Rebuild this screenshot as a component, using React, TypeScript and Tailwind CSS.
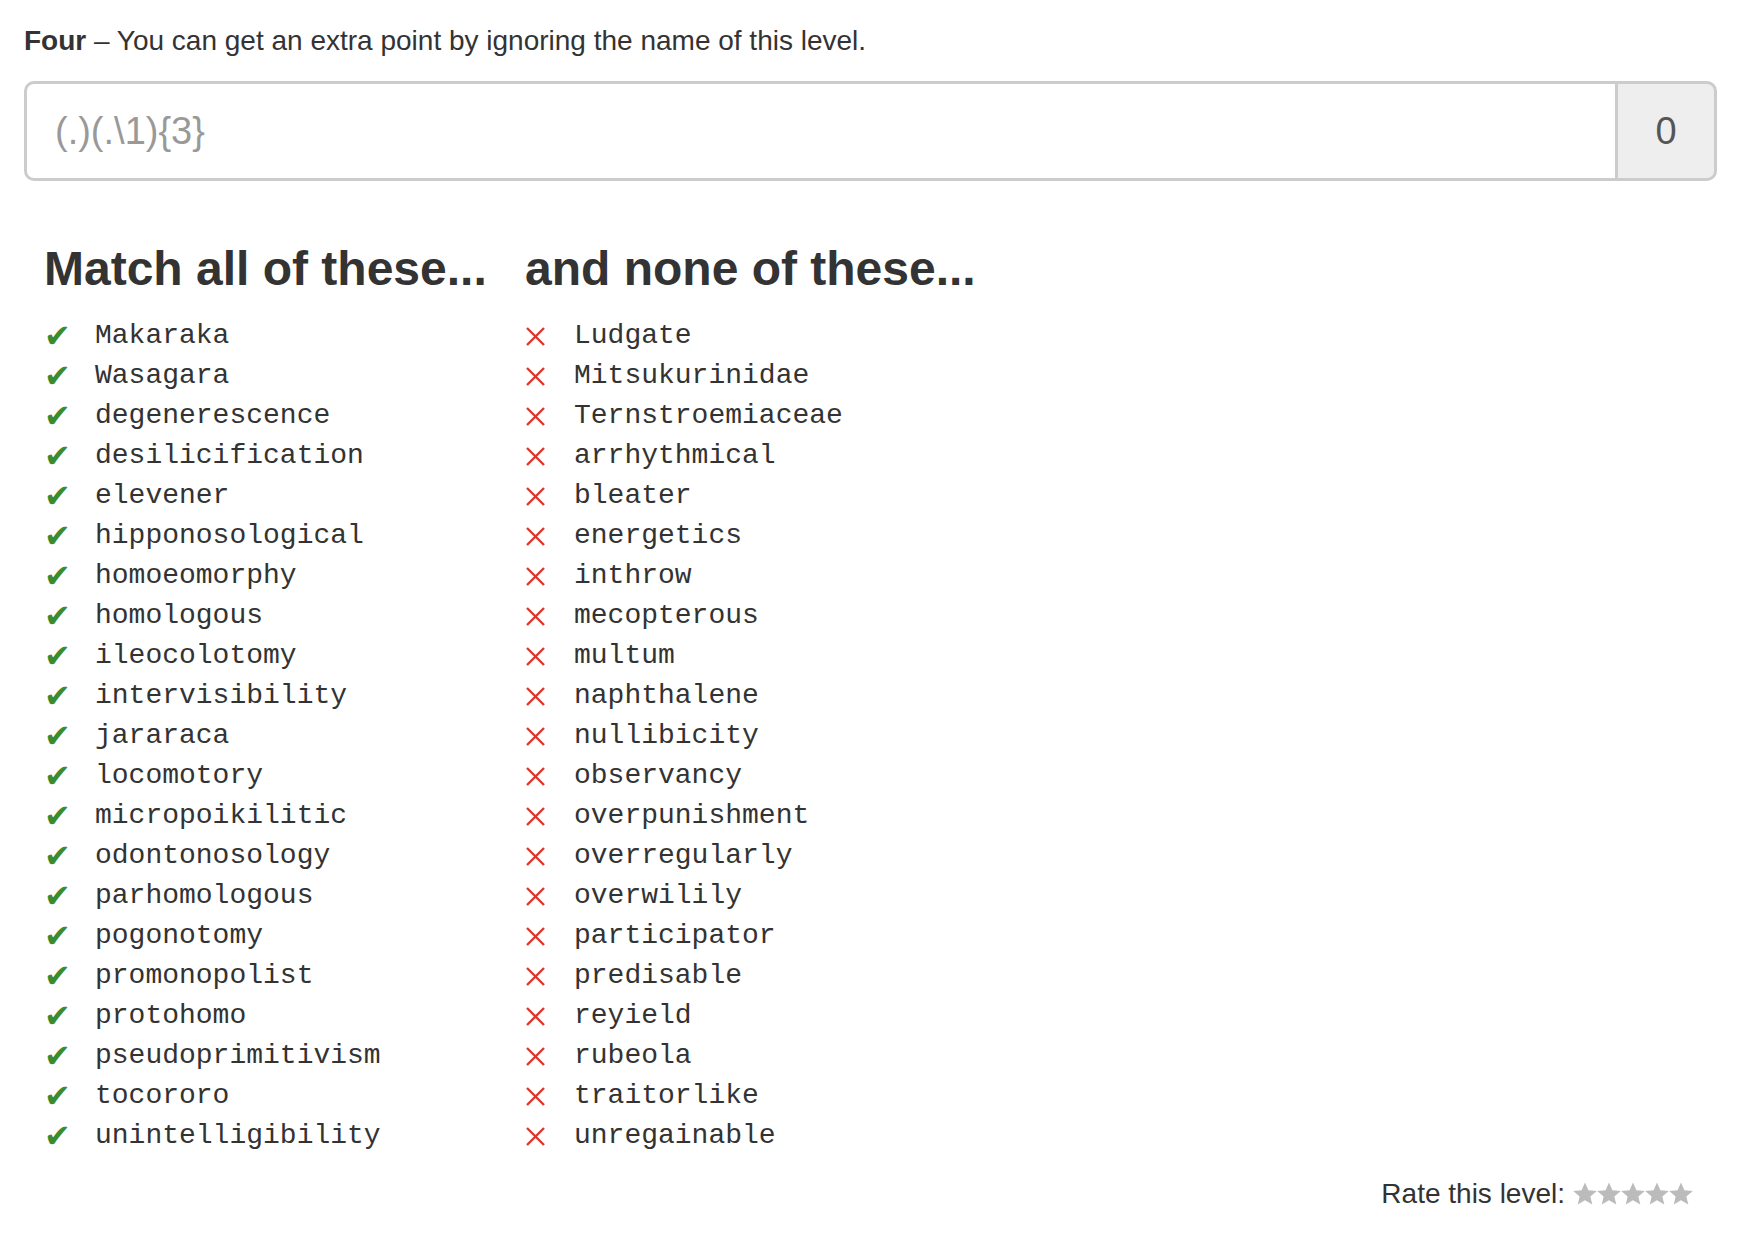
const matches = [
  "Makaraka",
  "Wasagara",
  "degenerescence",
  "desilicification",
  "elevener",
  "hipponosological",
  "homoeomorphy",
  "homologous",
  "ileocolotomy",
  "intervisibility",
  "jararaca",
  "locomotory",
  "micropoikilitic",
  "odontonosology",
  "parhomologous",
  "pogonotomy",
  "promonopolist",
  "protohomo",
  "pseudoprimitivism",
  "tocororo",
  "unintelligibility",
];

const nonMatches = [
  "Ludgate",
  "Mitsukurinidae",
  "Ternstroemiaceae",
  "arrhythmical",
  "bleater",
  "energetics",
  "inthrow",
  "mecopterous",
  "multum",
  "naphthalene",
  "nullibicity",
  "observancy",
  "overpunishment",
  "overregularly",
  "overwilily",
  "participator",
  "predisable",
  "reyield",
  "rubeola",
  "traitorlike",
  "unregainable",
];

function Cross() {
  return (
    <svg width="21" height="21" viewBox="0 0 21 21" className="text-[#e0352b]">
      <path d="M2 2 L19 19 M19 2 L2 19" stroke="currentColor" strokeWidth="2.4" fill="none" />
    </svg>
  );
}

function Star() {
  return (
    <svg width="24" height="24" viewBox="1 1 22 22" className="text-[#bbb]">
      <path
        d="M12 1.5l3.1 7.1 7.7.6-5.9 5 1.8 7.5L12 17.7l-6.7 4 1.8-7.5-5.9-5 7.7-.6z"
        fill="currentColor"
      />
    </svg>
  );
}

function WordList({ words, good }: { words: string[]; good: boolean }) {
  return (
    <ul className="mt-[21px]">
      {words.map((w) => (
        <li key={w} className="flex h-[40px] items-center">
          <span className={good ? "flex w-[51px] items-center" : "flex w-[49px] items-center"}>
            {good ? (
              <span className="font-['DejaVu_Sans',sans-serif] text-[32px] leading-none text-[#3c8b2c]">✔</span>
            ) : (
              <Cross />
            )}
          </span>
          <span className="font-['Liberation_Mono',monospace] text-[28px] leading-[40px] text-[#333]">{w}</span>
        </li>
      ))}
    </ul>
  );
}

export default function App() {
  return (
    <div className="min-h-screen bg-white pl-[24px] pr-[35px] pt-[21px] font-['Liberation_Sans',Arial,sans-serif] text-[#333]">
      <p className="text-[28px] leading-[40px]">
        <b>Four</b> – You can get an extra point by ignoring the name of this level.
      </p>

      <div className="mt-[20px] flex h-[100px]">
        <input
          type="text"
          placeholder="(.)(.\1){3}"
          className="min-w-0 flex-1 rounded-l-[10px] border-[3px] border-[#ccc] bg-white pl-[28px] text-[38px] text-[#555] outline-none placeholder:text-[#999]"
        />
        <div className="flex w-[99px] items-center justify-center rounded-r-[10px] border-[3px] border-l-0 border-[#ccc] bg-[#eee] text-[38px] text-[#555]">
          0
        </div>
      </div>

      <div className="mt-[61px] flex pl-[20px]">
        <div className="w-[481px]">
          <h3 className="text-[48px] font-bold leading-[53px]">Match all of these...</h3>
          <WordList words={matches} good />
        </div>
        <div>
          <h3 className="text-[48px] font-bold leading-[53px]">and none of these...</h3>
          <WordList words={nonMatches} good={false} />
        </div>
      </div>

      <div className="mt-[20px] flex items-center justify-end pr-[24px] text-[28px] leading-[36px]">
        <span>Rate this level:</span>
        <span className="ml-[8px] flex">
          <Star />
          <Star />
          <Star />
          <Star />
          <Star />
        </span>
      </div>
    </div>
  );
}
